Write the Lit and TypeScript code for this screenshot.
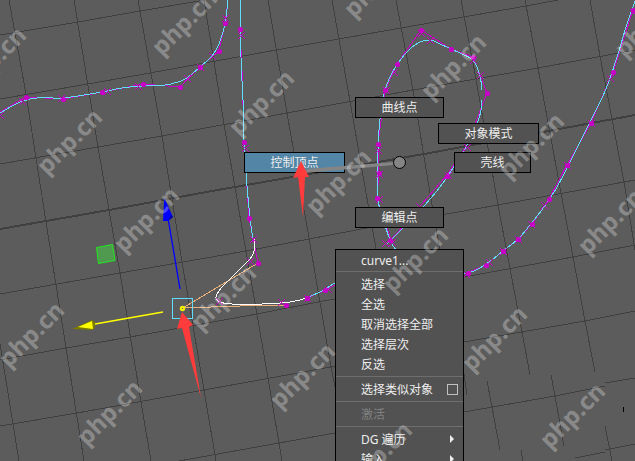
import { LitElement, html, svg, css } from "lit";
import { customElement } from "lit/decorators.js";

type Pt = [number, number];
type Line = Pt[];

const GRID: Line[] = [
  [[0, 35], [78, 22], [140, 11], [205, 0]],
  [[0, 99], [88, 84], [150, 73], [276, 50], [401, 28], [526, 6], [558, 0]],
  [[0, 164], [98, 147], [162, 136], [287, 113], [413, 90], [538, 68], [635, 50]],
  [[0, 294], [120, 273], [246, 251], [372, 227], [498, 205], [635, 180]],
  [[0, 360], [66, 348], [130, 337], [257, 314], [323, 301], [464, 277], [573, 257], [635, 245]],
  [[0, 426], [77, 413], [204, 390], [331, 367], [464, 342], [585, 321], [635, 311]],
  [[179, 461], [279, 443], [335, 433], [464, 412], [555, 396], [605, 386]],
  [[605, 383], [635, 378]],
  [[575, 458], [605, 452]],
  [[605, 450], [635, 444]],
  [[0, 344], [13, 424], [19, 461]],
  [[9, 0], [26, 94], [46, 222], [66, 348], [84, 461]],
  [[74, 0], [98, 147], [120, 273], [141, 402], [151, 461]],
  [[138, 0], [162, 136], [182, 262], [204, 390], [216, 461]],
  [[204, 0], [224, 124], [246, 251], [268, 378], [282, 461]],
  [[268, 0], [287, 113], [309, 238], [331, 367], [335, 387]],
  [[332, 0], [350, 101], [372, 227], [380, 270]],
  [[396, 0], [413, 90], [434, 217], [440, 250]],
  [[461, 0], [476, 79], [498, 205], [522, 332], [530, 375]],
  [[525, 0], [538, 68], [561, 193], [585, 321], [595, 372]],
  [[590, 0], [600, 56], [624, 182], [635, 250]],
  [[464, 374], [467, 395]],
  [[487, 381], [492, 407], [500, 450]],
  [[551, 375], [555, 396], [564, 446]],
  [[521, 450], [523, 461]],
  [[605, 426], [612, 461]],
];

const AXIS: Line = [[0, 229], [109, 210], [212, 191], [424, 154], [635, 115]];

const CURVES: Line[] = [
  [[0, 113], [14, 105], [23, 101], [37, 98], [62, 98], [78, 96], [102, 92], [122, 88], [142, 86],
   [165, 85], [178, 82], [187, 78], [200, 67], [212, 56], [219, 44], [225, 24], [228, 0]],
  [[241, 0], [241, 57], [243, 100], [244, 140], [246, 173], [250, 218], [253, 239]],
  [[307, 298], [324, 290], [345, 280], [400, 282], [464, 274], [486, 264], [503, 251], [518, 239],
   [530, 225], [544, 207], [557, 187], [574, 154], [590, 122], [606, 89], [618, 54], [626, 27], [635, 1]],
  [[396, 250], [390, 240], [382, 215], [378, 198], [378, 150], [379, 130], [383, 97], [392, 73],
   [405, 54], [418, 43], [430, 40], [440, 44], [451, 49], [462, 54], [473, 60], [479, 73],
   [482, 90], [481, 110], [477, 124], [464, 151], [453, 168], [440, 187], [424, 206], [404, 227], [386, 245]],
];

const ACTIVE: Line = [[254, 239], [254, 251], [250, 259], [235, 274], [222, 287], [216, 297],
  [220, 302], [232, 304], [262, 304], [290, 302], [307, 298]];

const HULL: Line[] = [
  [[0, 112], [26, 97], [63, 99], [103, 92], [143, 84], [180, 87], [200, 67], [219, 51], [225, 24], [228, 0]],
  [[240, 17], [240, 29], [242, 70], [243, 105], [244, 142], [249, 218], [258, 263]],
  [[307, 298], [325, 290], [345, 280]],
  [[464, 274], [486, 265], [503, 251], [518, 239], [532, 224], [549, 199], [567, 165], [591, 123],
   [613, 72], [633, 10]],
  [[391, 240], [377, 198], [379, 173], [378, 144], [385, 90], [397, 64], [421, 30], [451, 49],
   [473, 57], [487, 93], [467, 145], [447, 175], [391, 240]],
];

const VERTICES: Pt[] = [
  [26, 97], [63, 99], [102, 92], [143, 84], [180, 87], [200, 67], [219, 51], [225, 23], [240, 29],
  [244, 142], [249, 218], [258, 263], [286, 305], [307, 298], [325, 290], [377, 198], [379, 173],
  [378, 144], [385, 90], [397, 64], [421, 30], [451, 49], [473, 57], [487, 93], [447, 176],
  [390, 240], [468, 273], [486, 265], [503, 251], [518, 239], [532, 224], [549, 199], [567, 165],
  [591, 123], [613, 72], [633, 10],
];

const CROSSES: Pt[] = [
  [0, 115], [22, 101], [61, 98], [107, 91], [138, 86], [187, 78], [200, 67], [212, 56], [225, 18],
  [241, 35], [245, 148], [253, 239], [250, 261], [219, 301], [281, 302], [307, 298], [328, 289],
  [378, 150], [379, 174], [379, 199], [386, 90], [394, 72], [421, 33], [430, 40], [473, 60],
  [480, 75], [467, 147], [448, 175], [419, 206], [385, 243], [392, 242], [466, 274], [489, 262],
  [503, 251], [518, 239], [531, 224], [544, 205], [567, 165], [591, 123], [610, 78], [633, 12],
];

const MARKS: Pt[] = [
  [-5, 61], [186, 24], [378, -14], [649, 26], [71, 143], [263, 104], [455, 68], [148, 221],
  [340, 183], [533, 147], [33, 336], [225, 299], [417, 261], [612, 223], [111, 414], [304, 377],
  [496, 340], [574, 417], [381, 456],
];

const poly = (line: Line) => line.map((p) => p.join(",")).join(" ");

const smooth = (line: Line) => {
  let d = `M${line[0]}`;
  for (let i = 0; i < line.length - 1; i++) {
    const a = line[Math.max(i - 1, 0)];
    const b = line[i];
    const c = line[i + 1];
    const e = line[Math.min(i + 2, line.length - 1)];
    d += `C${b[0] + (c[0] - a[0]) / 6},${b[1] + (c[1] - a[1]) / 6} ${c[0] - (e[0] - b[0]) / 6},${c[1] - (e[1] - b[1]) / 6} ${c}`;
  }
  return d;
};

@customElement("view-scene")
export class ViewScene extends LitElement {
  static styles = css`
    :host { display: block; }
    svg { display: block; width: 100%; height: 100%; }
    .line { fill: none; stroke-width: 1; }
    .grid { stroke: #404040; shape-rendering: crispEdges; }
    .axis { stroke: #404040; stroke-width: 2; shape-rendering: crispEdges; }
    .hull { stroke: #c800c8; shape-rendering: crispEdges; }
    .curve { stroke: #64dcff; shape-rendering: crispEdges; }
    .active { stroke: #ffffff; shape-rendering: crispEdges; }
    .soft { stroke: #e8ae78; shape-rendering: crispEdges; }
    .cross { stroke: #c800c8; fill: none; shape-rendering: crispEdges; }
    .vertex { fill: #c800c8; }
  `;

  render() {
    return html`<svg aria-hidden="true">
      ${GRID.map((l) => svg`<polyline class="line grid" points=${poly(l)} />`)}
      <polyline class="line axis" points=${poly(AXIS)} />
      ${HULL.map((l) => svg`<polyline class="line hull" points=${poly(l)} />`)}
      <polyline class="line soft" points="258,263 183,308" />
      <polyline class="line soft" points="183,308 240,306 286,305" />
      ${CURVES.map((l) => svg`<path class="line curve" d=${smooth(l)} />`)}
      <path class="line active" d=${smooth(ACTIVE)} />
      ${CROSSES.map(([x, y]) => svg`<path class="cross" d="M${x - 3},${y - 3}l7,7m0,-7l-7,7" />`)}
      ${VERTICES.map(([x, y]) => svg`<circle class="vertex" cx=${x + 0.5} cy=${y + 0.5} r="2.6" />`)}
      <polygon points="96.5,247.5 112.5,244.5 115,260.5 98.5,263.5" fill="#509a50" stroke="#20e820" />
      <path d="M168,218L180,289" stroke="#0000ff" stroke-width="1.3" />
      <path d="M164.3,198L163,221L168,221L173,217Z" fill="#0000ff" />
      <path d="M168,221L173,217L171,215Z" fill="#0000a0" />
      <path d="M163,312L95,324" stroke="#ffff00" stroke-width="1.3" />
      <path d="M72,329L92,320L95,322L95,328L92,330Z" fill="#7a7a00" />
      <path d="M78,327L92,321L93,329Z" fill="#ffff00" />
      <rect x="172.5" y="298.5" width="20" height="20" fill="none" stroke="#64dcff" />
      <circle cx="182.5" cy="308.5" r="2.7" fill="#f0f000" />
      <rect x="182" y="308" width="1" height="1" fill="#5c5c5c" />
      <path d="M623.5,407V412" stroke="#000" />
    </svg>`;
  }
}

@customElement("view-overlay")
export class ViewOverlay extends LitElement {
  static styles = css`
    :host { display: block; }
    svg { display: block; width: 100%; height: 100%; }
    .mark {
      font: bold 24px "Noto Sans", "Open Sans", sans-serif;
      fill: #ffffff;
      fill-opacity: 0.3;
      text-anchor: middle;
    }
  `;

  render() {
    return html`<svg aria-hidden="true">
      <path d="M306,169L394,162V165L306,173Z" fill="#848484" />
      <circle cx="399.5" cy="162.5" r="6" fill="#848484" stroke="#000" />
      <polygon points="301,161 293,178 298,177 303,217 305,177 309,177" fill="#ff3b3b" />
      <polygon points="182,312 177,329 182,328 201,398 189,327 193,325" fill="#ff3b3b" />
      ${MARKS.map(([x, y]) => svg`<text class="mark" transform="translate(${x} ${y}) rotate(-45)" y="6">php.cn</text>`)}
    </svg>`;
  }
}

@customElement("app-root")
export class AppRoot extends LitElement {
  static styles = css`
    :host {
      display: block;
      position: relative;
      height: 100vh;
      overflow: hidden;
      background: #5c5c5c;
      color: #eeeeee;
      font: 12px/20px "Noto Sans", "Noto Sans CJK SC", sans-serif;
    }
    .layer { position: absolute; inset: 0; }
    .top { pointer-events: none; }
    button { font: inherit; color: inherit; margin: 0; padding: 0; border: 0; background: none; }
    .radial {
      position: absolute;
      box-sizing: border-box;
      height: 21px;
      border: 1px solid #000;
      background: #525252;
      text-align: center;
    }
    .north { left: 355px; top: 97px; width: 89px; }
    .north-east { left: 438px; top: 123px; width: 101px; }
    .west { left: 244px; top: 152px; width: 101px; background: #5285a6; }
    .east { left: 454px; top: 152px; width: 77px; }
    .south { left: 355px; top: 207px; width: 89px; }
    .menu {
      position: absolute;
      left: 335px;
      top: 249px;
      box-sizing: border-box;
      width: 129px;
      border: 1px solid #000;
      background: #525252;
    }
    .item {
      display: flex;
      align-items: center;
      justify-content: space-between;
      box-sizing: border-box;
      width: 100%;
      height: 20px;
      padding: 0 5px 0 25px;
      white-space: nowrap;
    }
    .text { padding-top: 2px; }
    .title { height: 19px; }
    .item:disabled { color: #808080; }
    .rule { height: 1px; margin: 2px 0; border: 0; background: #6e6e6e; }
    .box {
      appearance: none;
      box-sizing: border-box;
      width: 11px;
      height: 11px;
      margin: 0;
      border: 1px solid #c0c0c0;
    }
    .more {
      margin-right: 4px;
      border: 4px solid transparent;
      border-left-color: #eeeeee;
      border-right-width: 0;
    }
  `;

  render() {
    return html`
      <view-scene class="layer"></view-scene>
      <button class="radial north">曲线点</button>
      <button class="radial north-east">对象模式</button>
      <button class="radial west">控制顶点</button>
      <button class="radial east">壳线</button>
      <button class="radial south">编辑点</button>
      <div class="menu">
        <button class="item title"><span class="text">curve1...</span></button>
        <hr class="rule" />
        ${["选择", "全选", "取消选择全部", "选择层次", "反选"].map(
          (t) => html`<button class="item"><span class="text">${t}</span></button>`,
        )}
        <hr class="rule" />
        <label class="item"><span class="text">选择类似对象</span><input class="box" type="checkbox" /></label>
        <hr class="rule" />
        <button class="item" disabled><span class="text">激活</span></button>
        <hr class="rule" />
        ${["DG 遍历", "输入"].map(
          (t) => html`<button class="item"><span class="text">${t}</span><span class="more"></span></button>`,
        )}
      </div>
      <view-overlay class="layer top"></view-overlay>
    `;
  }
}
